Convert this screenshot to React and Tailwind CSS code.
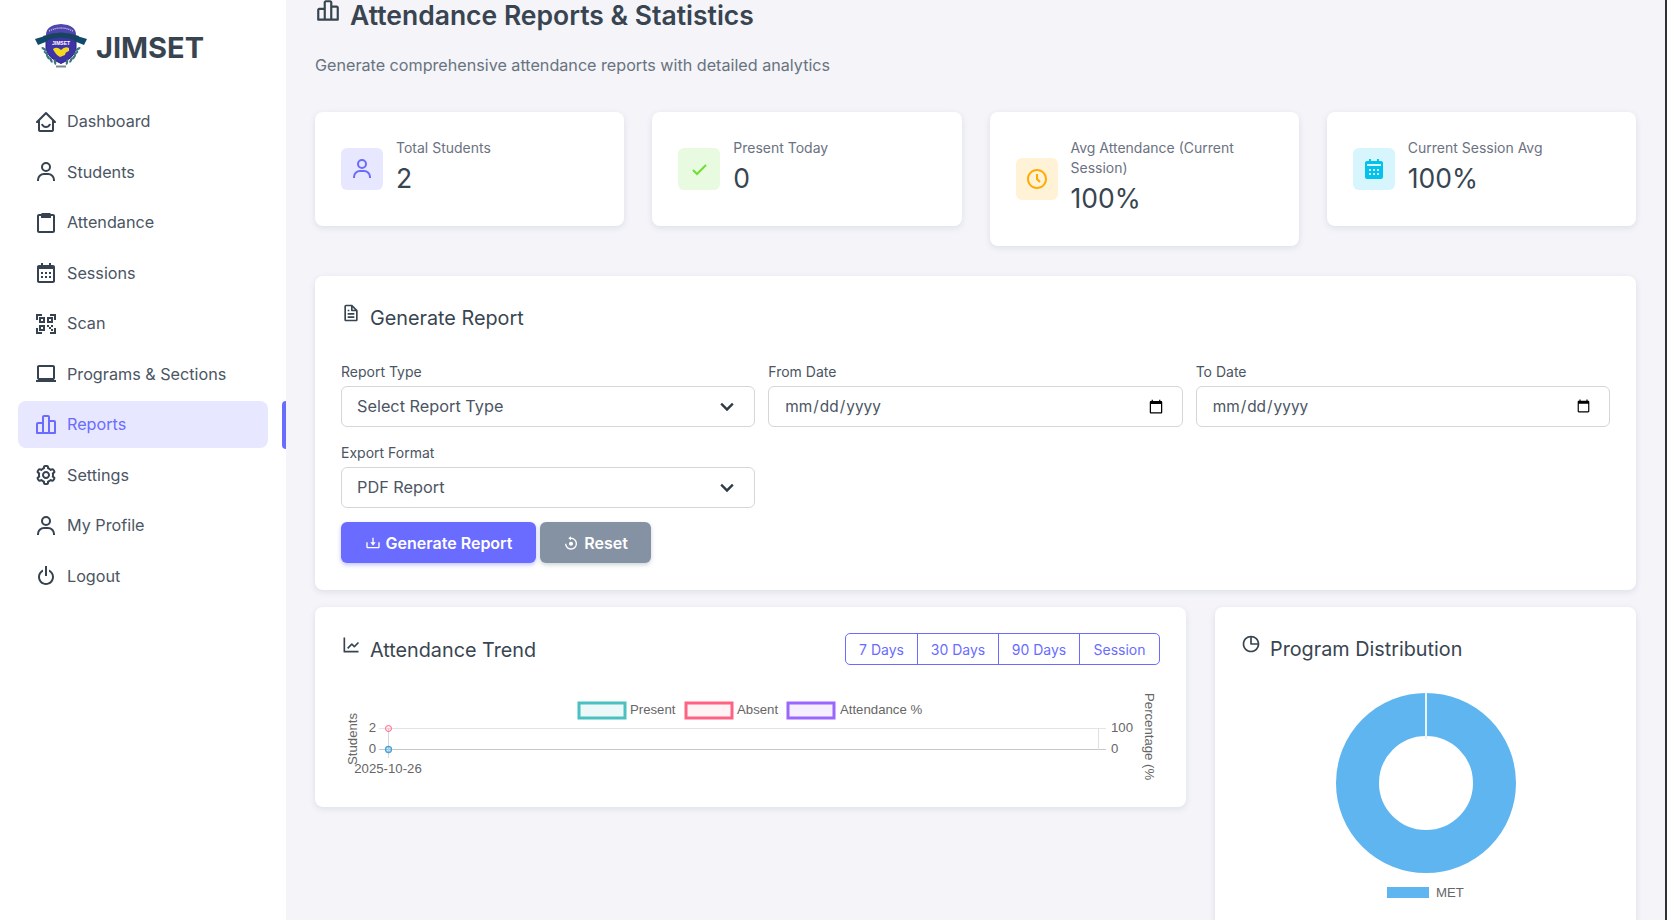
import React from "react";
import {
  BiHomeSmile, BiUser, BiClipboard, BiCalendar, BiQrScan, BiLaptop, BiBarChartAlt2, BiCog, BiPowerOff,
  BiCheck, BiTimeFive, BiSolidCalendar, BiFile, BiDownload, BiReset, BiLineChart, BiPieChartAlt, BiChevronDown,
} from "react-icons/bi";

const nav = [
  ["Dashboard", BiHomeSmile], ["Students", BiUser], ["Attendance", BiClipboard], ["Sessions", BiCalendar],
  ["Scan", BiQrScan], ["Programs & Sections", BiLaptop], ["Reports", BiBarChartAlt2, true], ["Settings", BiCog],
  ["My Profile", BiUser], ["Logout", BiPowerOff],
];

function Logo() {
  const leaves = [[9, 26, 35], [11, 30, 45], [13, 34, 55], [16, 37, 65], [20, 39, 80]];
  return (
    <svg width="54" height="46" viewBox="0 0 54 46" className="shrink-0">
      <path d="M11 12 Q11 2 26 1 Q41 2 41 12 Z" fill="#4f45ad" />
      <path d="M14 8 Q26 2 38 8" fill="none" stroke="#d8d6f0" strokeWidth="1.3" strokeDasharray="1 1" />
      <path d="M11 15 Q26 8 41 15 L41 26 Q39 35 26 40.5 Q13 35 11 26 Z" fill="#3f33a8" stroke="#2b2480" />
      <path d="M0 16 L10 13 L13 18 L3 22 Z" fill="#0f4a6b" />
      <path d="M52 16 L42 13 L39 18 L49 22 Z" fill="#0f4a6b" />
      <path d="M8 13 Q26 6 44 13 L42 18 Q26 11 10 18 Z" fill="#17455f" />
      <text x="26" y="21.5" textAnchor="middle" fontSize="5" fontWeight="700" fill="#fff" fontFamily="Liberation Sans, sans-serif">JIMSET</text>
      <path d="M18 26 Q22 23 26 27 Q30 23 34 25 L34 28 Q30 29 30 32 L25 34 Q20 31 18 26 Z" fill="#f4d91f" />
      {leaves.map(([x, y, r]) => (
        <g key={x} fill="#3f7482">
          <ellipse cx={x} cy={y} rx="3" ry="1.2" transform={`rotate(${r} ${x} ${y})`} />
          <ellipse cx={52 - x} cy={y} rx="3" ry="1.2" transform={`rotate(${-r} ${52 - x} ${y})`} />
        </g>
      ))}
      <rect x="21" y="42.5" width="10" height="2" fill="#7c8a94" />
    </svg>
  );
}

function Stat({ Icon, bg, color, label, value }) {
  return (
    <div className="bg-white rounded-lg shadow-[0_2px_6px_rgba(67,89,113,0.12)] p-[26px] flex items-center gap-[13px]">
      <div className={`w-[42px] h-[42px] rounded-md flex items-center justify-center shrink-0 text-[24px] ${bg} ${color}`}>
        <Icon />
      </div>
      <div className="min-w-0">
        <div className="text-[14px] leading-[20px] text-[#6b7280]">{label}</div>
        <div className="text-[26.5px] leading-[40px] text-[#384551] mb-[2px]">{value}</div>
      </div>
    </div>
  );
}

function Field({ label, children }) {
  return (
    <div className="flex flex-col">
      <label className="text-[14px] leading-[21px] text-[#4b5563] mb-[4px]">{label}</label>
      {children}
    </div>
  );
}

function Sel({ value }) {
  return (
    <div className="relative">
      <select defaultValue={value} className="appearance-none w-full h-[41px] rounded-md border border-[#d4d6da] bg-white pl-[15px] text-[16.3px] text-[#4b5563] outline-none">
        <option>{value}</option>
      </select>
      <BiChevronDown className="absolute right-[14px] top-[6px] text-[28px] text-[#2f3b47] pointer-events-none" />
    </div>
  );
}

function DateInput() {
  return (
    <input type="date" className="w-full h-[41px] rounded-md border border-[#d4d6da] bg-white px-[15px] pr-[16px] text-[15.4px] text-[#4b5563] outline-none" />
  );
}

function CardTitle({ Icon, children, cls = "" }) {
  return (
    <h5 className={`flex items-start gap-[9px] text-[19.8px] leading-[28px] font-normal text-[#384551] ${cls}`}>
      <Icon className="text-[20px] mt-[-1px] shrink-0" />
      <span>{children}</span>
    </h5>
  );
}

function TrendChart() {
  const t = { fontFamily: "Liberation Sans, Arial, sans-serif", fill: "#666" };
  const x = -341, y = -690;
  return (
    <svg width="820" height="110" viewBox="0 0 820 110" className="block">
      <g transform={`translate(${x} ${y})`} style={t}>
        <rect x="579" y="703" width="46" height="15" fill="rgba(75,192,192,0.1)" stroke="#4bc0c0" strokeWidth="3" />
        <text x="630" y="714" fontSize="13.2">Present</text>
        <rect x="686" y="703" width="46" height="15" fill="rgba(255,99,132,0.08)" stroke="#ff6384" strokeWidth="3" />
        <text x="737" y="714" fontSize="13.2">Absent</text>
        <rect x="788" y="703" width="46" height="15" fill="rgba(153,102,255,0.1)" stroke="#9966ff" strokeWidth="3" />
        <text x="840" y="714" fontSize="13.2">Attendance %</text>

        <line x1="379" x2="1106" y1="728.5" y2="728.5" stroke="#e4e4e4" />
        <line x1="379" x2="1106" y1="749.5" y2="749.5" stroke="#c6c6c6" />
        <line x1="388.5" x2="388.5" y1="728" y2="758" stroke="#d8d8d8" />
        <line x1="1098.5" x2="1098.5" y1="728" y2="750" stroke="#e0e0e0" />

        <circle cx="388.5" cy="728.5" r="3" fill="rgba(255,99,132,0.1)" stroke="#ff6384" />
        <circle cx="388.5" cy="749.5" r="3" fill="rgba(54,162,235,0.25)" stroke="#4aa3d8" strokeWidth="1.3" />

        <text x="372.5" y="732" fontSize="13.2" textAnchor="middle">2</text>
        <text x="372.5" y="753" fontSize="13.2" textAnchor="middle">0</text>
        <text x="388" y="773" fontSize="13.2" textAnchor="middle">2025-10-26</text>
        <text x="1111" y="732" fontSize="13.2">100</text>
        <text x="1111" y="753" fontSize="13.2">0</text>
        <text transform="translate(357 765) rotate(-90)" fontSize="13.2">Students</text>
        <text transform="translate(1145 693) rotate(90)" fontSize="13.2">Percentage (%</text>
      </g>
    </svg>
  );
}

function Donut() {
  return (
    <svg width="180" height="180" viewBox="0 0 180 180" className="block">
      <circle cx="90" cy="90" r="68.5" fill="none" stroke="#5fb5f0" strokeWidth="43" />
      <line x1="90" x2="90" y1="0" y2="46" stroke="#e8f3fb" strokeWidth="2" />
    </svg>
  );
}

export default function App() {
  return (
    <div className="flex h-[920px] overflow-hidden bg-[#f4f4f9] font-['Inter',sans-serif]">
      <aside className="w-[286px] shrink-0 bg-white px-[18px]">
        <div className="flex items-center gap-[7px] h-[92px] pl-[17px]">
          <Logo />
          <span className="text-[29px] font-bold text-[#384551] leading-none mt-[2px]">JIMSET</span>
        </div>
        <nav className="relative flex flex-col mt-[6px]">
          {nav.map(([name, Icon, active]) => (
            <a key={name} className={`relative flex items-center gap-[9px] h-[47px] mb-[3.5px] pl-[16px] rounded-lg text-[16.2px] ${active ? "bg-[#e7e7ff] text-[#696cff]" : "text-[#4b5563]"}`}>
              <Icon className={`text-[24px] shrink-0 ${active ? "text-[#696cff]" : "text-[#364250]"}`} />
              <span>{name}</span>
              {active && <span className="absolute left-[264px] top-0 w-[4px] h-[48px] rounded-l-[4px] bg-[#696cff]" />}
            </a>
          ))}
        </nav>
      </aside>

      <main className="flex-1 min-w-0 px-[29px]">
        <h1 className="flex items-start gap-[9px] text-[26.5px] leading-[30px] font-semibold text-[#384551]">
          <BiBarChartAlt2 className="text-[26px] mt-[-2px] shrink-0" />
          <span>Attendance Reports &amp; Statistics</span>
        </h1>
        <p className="text-[16.15px] leading-[24px] text-[#697380] mt-[23px]">Generate comprehensive attendance reports with detailed analytics</p>

        <div className="grid grid-cols-4 gap-[28px] items-start mt-[35px]">
          <Stat Icon={BiUser} bg="bg-[#e7e7ff]" color="text-[#696cff]" label="Total Students" value="2" />
          <Stat Icon={BiCheck} bg="bg-[#e8fadf]" color="text-[#71dd37]" label="Present Today" value="0" />
          <Stat Icon={BiTimeFive} bg="bg-[#fff2d6]" color="text-[#ffab00]" label="Avg Attendance (Current Session)" value="100%" />
          <Stat Icon={BiSolidCalendar} bg="bg-[#d7f5fc]" color="text-[#03c3ec]" label="Current Session Avg" value="100%" />
        </div>

        <section className="bg-white rounded-lg shadow-[0_2px_6px_rgba(67,89,113,0.12)] px-[26px] pt-[28px] pb-[27px] mt-[30px]">
          <CardTitle Icon={BiFile}>Generate Report</CardTitle>
          <div className="grid grid-cols-3 gap-x-[13px] gap-y-[15px] mt-[29px]">
            <Field label="Report Type"><Sel value="Select Report Type" /></Field>
            <Field label="From Date"><DateInput /></Field>
            <Field label="To Date"><DateInput /></Field>
            <Field label="Export Format"><Sel value="PDF Report" /></Field>
          </div>
          <div className="flex gap-[4px] mt-[14px]">
            <button className="flex items-center justify-center gap-[5px] w-[195px] h-[41px] rounded-md bg-[#696cff] text-white text-[16px] font-semibold shadow-[0_2px_4px_rgba(105,108,255,0.4)]">
              <BiDownload className="text-[16px]" /> Generate Report
            </button>
            <button className="flex items-center justify-center gap-[5px] w-[111px] h-[41px] rounded-md bg-[#8592a3] text-white text-[16px] font-semibold shadow-[0_2px_4px_rgba(133,146,163,0.4)]">
              <BiReset className="text-[16px]" /> Reset
            </button>
          </div>
        </section>

        <div className="flex items-start gap-[29px] mt-[17px]">
          <section className="w-[871px] shrink-0 h-[200px] bg-white rounded-lg shadow-[0_2px_6px_rgba(67,89,113,0.12)] px-[26px] pt-[26px]">
            <div className="flex items-start justify-between">
              <CardTitle Icon={BiLineChart} cls="pt-[3px]">Attendance Trend</CardTitle>
              <div className="flex h-[32px] border border-[#696cff] rounded-[5px] text-[14px] text-[#696cff]">
                <span className="w-[71px] flex items-center justify-center">7 Days</span>
                <span className="w-[81px] flex items-center justify-center border-l border-[#696cff]">30 Days</span>
                <span className="w-[81px] flex items-center justify-center border-l border-[#696cff]">90 Days</span>
                <span className="w-[80px] flex items-center justify-center border-l border-[#696cff]">Session</span>
              </div>
            </div>
            <div className="mt-[25px]"><TrendChart /></div>
          </section>

          <section className="flex-1 min-w-0 h-[330px] bg-white rounded-lg shadow-[0_2px_6px_rgba(67,89,113,0.12)] px-[26px] pt-[27px]">
            <CardTitle Icon={BiPieChartAlt} cls="pt-[1px]">Program Distribution</CardTitle>
            <div className="flex justify-center mt-[30px]"><Donut /></div>
            <div className="flex items-center justify-center gap-[7px] mt-[10px] text-[13.2px] text-[#666] font-['Liberation_Sans',sans-serif]">
              <span className="w-[42px] h-[11px] bg-[#5fb5f0]" />
              <span>MET</span>
            </div>
          </section>
        </div>
      </main>
      <div className="w-[2px] shrink-0 bg-[#2f3136]" />
    </div>
  );
}
